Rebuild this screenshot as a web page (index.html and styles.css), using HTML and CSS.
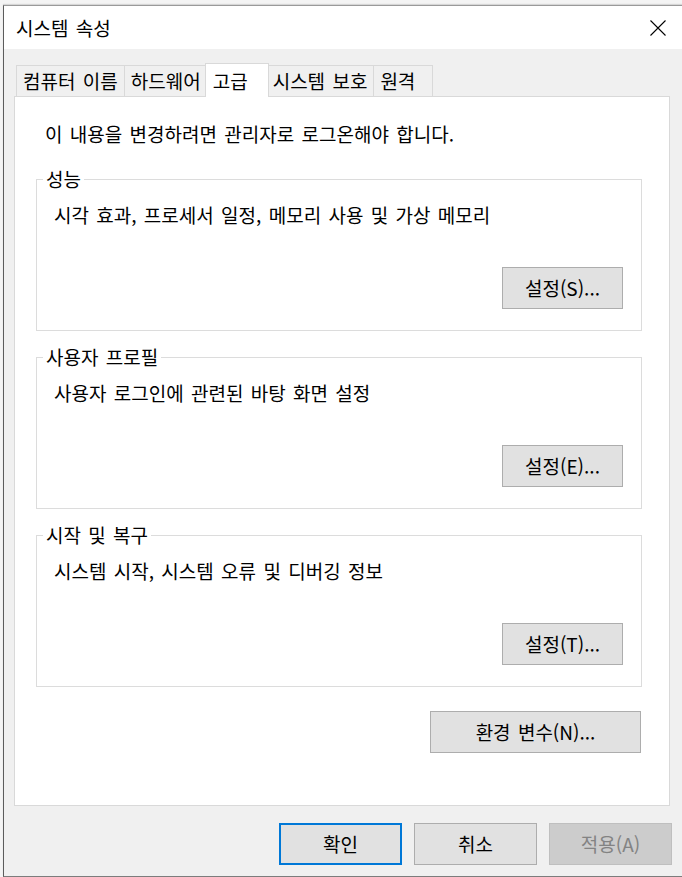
FILE: index.html
```html
<!DOCTYPE html>
<html lang="ko">
<head>
<meta charset="utf-8">
<title>시스템 속성</title>
<link rel="stylesheet" href="styles.css">
</head>
<body>
<div class="window">
  <div class="titlebar">
    <span class="title">시스템 속성</span>
    <svg class="close" width="16" height="16" viewBox="0 0 16 16" aria-label="닫기">
      <path d="M0.5 0.5 L15.5 15.5 M15.5 0.5 L0.5 15.5" stroke="#000" stroke-width="1.1" fill="none"/>
    </svg>
  </div>
  <div class="dialog">
    <div class="tabs">
      <div class="tab">컴퓨터 이름</div>
      <div class="tab">하드웨어</div>
      <div class="tab active">고급</div>
      <div class="tab">시스템 보호</div>
      <div class="tab">원격</div>
    </div>
    <div class="panel">
      <p class="intro">이 내용을 변경하려면 관리자로 로그온해야 합니다.</p>
      <fieldset class="group">
        <legend>성능</legend>
        <div class="group-body">
          <p class="desc">시각 효과, 프로세서 일정, 메모리 사용 및 가상 메모리</p>
          <div class="btn-row"><button class="btn">설정(S)...</button></div>
        </div>
      </fieldset>
      <fieldset class="group">
        <legend>사용자 프로필</legend>
        <div class="group-body">
          <p class="desc">사용자 로그인에 관련된 바탕 화면 설정</p>
          <div class="btn-row"><button class="btn">설정(E)...</button></div>
        </div>
      </fieldset>
      <fieldset class="group">
        <legend>시작 및 복구</legend>
        <div class="group-body">
          <p class="desc">시스템 시작, 시스템 오류 및 디버깅 정보</p>
          <div class="btn-row"><button class="btn">설정(T)...</button></div>
        </div>
      </fieldset>
      <div class="env-row"><button class="btn btn-wide">환경 변수(N)...</button></div>
    </div>
    <div class="actions">
      <button class="btn btn-action btn-default">확인</button>
      <button class="btn btn-action">취소</button>
      <button class="btn btn-action btn-disabled">적용(A)</button>
    </div>
  </div>
</div>
</body>
</html>
```

FILE: styles.css
```css
html, body {
  margin: 0;
  padding: 0;
  height: 877px;
  overflow: hidden;
}
body {
  background: #f4f4f4;
  font-family: "Noto Sans CJK KR", "Noto Sans", sans-serif;
  font-size: 19px;
  word-spacing: 2px;
  color: #000;
}
.window {
  margin: 5px 0 0 3px;
  height: 872px;
  box-sizing: border-box;
  border-left: 1px solid #5c5c5c;
  border-top: 1px solid #9a9a9a;
  border-bottom: 1px solid #7c7c7c;
  box-shadow: 0 -1px 1px rgba(0, 0, 0, 0.12);
  display: flex;
  flex-direction: column;
  background: #f0f0f0;
}
.titlebar {
  height: 43px;
  flex: none;
  background: #fff;
  display: flex;
  align-items: center;
  justify-content: space-between;
  padding: 0 16px 0 12px;
}
.title {
  line-height: 24px;
}
.close {
  display: block;
}
.dialog {
  flex: 1;
  display: flex;
  flex-direction: column;
  padding: 14px 12px 0 10px;
}
.tabs {
  display: flex;
  align-items: flex-end;
  height: 33px;
  padding-left: 2px;
}
.tab {
  box-sizing: border-box;
  height: 31px;
  min-width: 60px;
  padding: 0 6px;
  border: 1px solid #d9d9d9;
  border-bottom: none;
  margin-left: -1px;
  background: #f0f0f0;
  display: flex;
  align-items: center;
  line-height: 24px;
  white-space: nowrap;
}
.tab:first-child {
  margin-left: 0;
}
.tab.active {
  position: relative;
  z-index: 1;
  height: 34px;
  margin: 0 -2px -1px -3px;
  padding: 0 8px 0 7px;
  background: #fff;
  min-width: 64px;
}
.panel {
  box-sizing: border-box;
  height: 710px;
  flex: none;
  background: #fff;
  border: 1px solid #d9d9d9;
  padding: 25px 27px 0 21px;
}
.intro {
  margin: 0 0 21px 0;
  padding-left: 9px;
  line-height: 24px;
}
.group {
  margin: 0 0 14px 0;
  padding: 0;
  border: 1px solid #dcdcdc;
  min-inline-size: 0;
}
.group legend {
  margin-left: 6px;
  padding: 0 3px;
  line-height: 24px;
}
.group-body {
  padding: 12px 18px 21px 17px;
}
.desc {
  margin: 0;
  line-height: 24px;
}
.btn-row {
  display: flex;
  justify-content: flex-end;
  margin-top: 40px;
}
.btn {
  box-sizing: border-box;
  width: 121px;
  height: 42px;
  background: #e1e1e1;
  border: 1px solid #adadad;
  font-family: inherit;
  font-size: 19px;
  word-spacing: 2px;
  color: #000;
  padding: 0;
  line-height: 24px;
}
.env-row {
  display: flex;
  justify-content: flex-end;
  margin-top: 24px;
  padding-right: 1px;
}
.btn-wide {
  width: 211px;
}
.actions {
  display: flex;
  justify-content: flex-end;
  gap: 12px;
  margin-top: 17px;
  margin-right: -2px;
}
.btn-action {
  width: 123px;
}
.btn-default {
  border: 2px solid #0078d7;
}
.btn-disabled {
  background: #cccccc;
  border-color: #bfbfbf;
  color: #838383;
}
```
